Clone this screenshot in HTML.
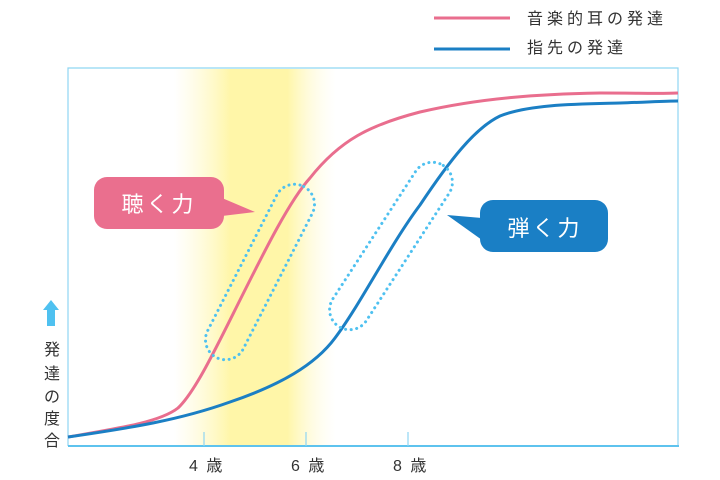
<!DOCTYPE html>
<html><head><meta charset="utf-8"><style>
html,body{margin:0;padding:0;background:#fff;}
svg{display:block;font-family:"Liberation Sans","Noto Sans CJK JP",sans-serif;}
</style></head><body>
<svg width="720" height="480" viewBox="0 0 720 480" xmlns="http://www.w3.org/2000/svg">
<defs>
<linearGradient id="yb" x1="0" x2="1" y1="0" y2="0">
<stop offset="0" stop-color="#fff9c8" stop-opacity="0"/>
<stop offset="0.35" stop-color="#fff6a8"/>
<stop offset="0.7" stop-color="#fff6a8"/>
<stop offset="1" stop-color="#fffbe0" stop-opacity="0"/>
</linearGradient>
</defs>
<rect x="174" y="69" width="162" height="376" fill="url(#yb)"/>
<path d="M68 446 V68 H678 V446" fill="none" stroke="#8fd6f2" stroke-width="1.2"/>
<line x1="68" y1="446" x2="679" y2="446" stroke="#5ec3ee" stroke-width="2"/>
<g stroke="#8fd6f2" stroke-width="1.2">
<line x1="204" y1="432" x2="204" y2="446"/>
<line x1="306" y1="432" x2="306" y2="446"/>
<line x1="408" y1="432" x2="408" y2="446"/>
</g>
<g font-size="16" fill="#333" letter-spacing="2">
<text x="189" y="471">4 歳</text>
<text x="291" y="471">6 歳</text>
<text x="393" y="471">8 歳</text>
</g>
<path d="M51 300 L59 310 H55 V326 H47 V310 H43 Z" fill="#4fc1f0"/>
<g font-size="16" fill="#333" text-anchor="middle">
<text x="52" y="355">発</text>
<text x="52" y="379">達</text>
<text x="52" y="402">の</text>
<text x="52" y="424">度</text>
<text x="52" y="446">合</text>
</g>
<line x1="434" y1="18" x2="510" y2="18" stroke="#e96e8e" stroke-width="3"/>
<line x1="434" y1="49" x2="510" y2="49" stroke="#1b7fc4" stroke-width="3"/>
<g font-size="16" fill="#333" letter-spacing="4">
<text x="527" y="24">音楽的耳の発達</text>
<text x="527" y="53">指先の発達</text>
</g>
<path d="M68 437 C120 428 160 422 178 408 C195 392 215 350 240 300 C265 250 290 200 310 178 C340 140 370 125 420 112 C480 98 540 94 600 93 C640 93 660 94 678 93" fill="none" stroke="#e96e8e" stroke-width="3"/>
<path d="M68 437 C130 428 180 420 230 402 C280 385 315 365 335 338 C360 305 390 245 420 205 C450 160 475 128 500 116 C530 104 580 104 620 103 C650 102 665 101 678 101" fill="none" stroke="#1b7fc4" stroke-width="3"/>
<rect x="240" y="176" width="40" height="192" rx="20" transform="rotate(27 260 272)" fill="none" stroke="#4fc1f0" stroke-width="3" stroke-dasharray="0.1 5.5" stroke-linecap="round"/>
<rect x="371" y="150" width="40" height="192" rx="20" transform="rotate(33 391 246)" fill="none" stroke="#4fc1f0" stroke-width="3" stroke-dasharray="0.1 5.5" stroke-linecap="round"/>
<rect x="94" y="177" width="130" height="52" rx="13" fill="#ea6f8e"/>
<path d="M222 198 L255 212 L222 216 Z" fill="#ea6f8e"/>
<text x="159" y="212" font-size="22" fill="#fff" text-anchor="middle" letter-spacing="3">聴く力</text>
<rect x="480" y="200" width="128" height="52" rx="13" fill="#1a7fc5"/>
<path d="M482 218 L447 215 L482 240 Z" fill="#1a7fc5"/>
<text x="545" y="236" font-size="22" fill="#fff" text-anchor="middle" letter-spacing="3">弾く力</text>
</svg>
</body></html>
